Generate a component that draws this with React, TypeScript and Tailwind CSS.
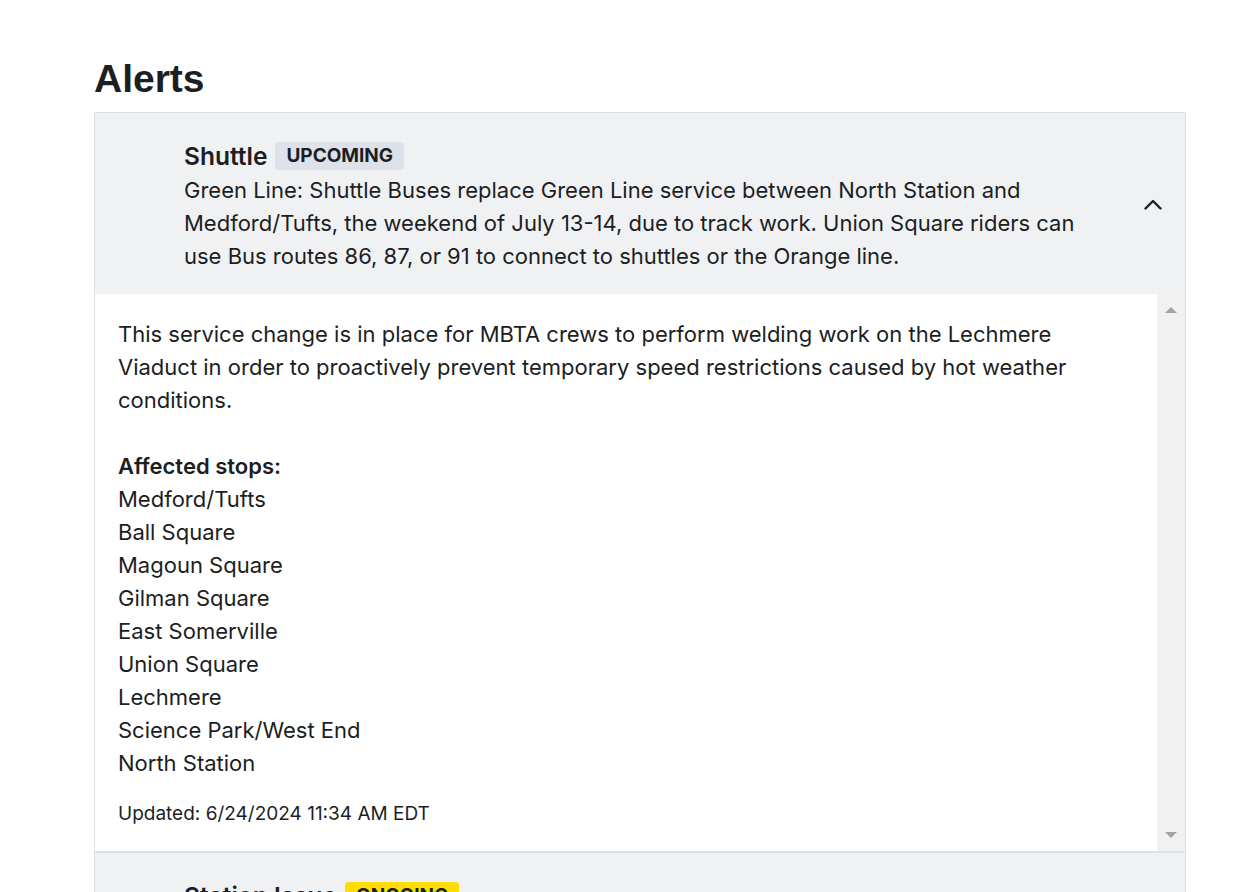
import React from "react";

const stops = [
  "Medford/Tufts",
  "Ball Square",
  "Magoun Square",
  "Gilman Square",
  "East Somerville",
  "Union Square",
  "Lechmere",
  "Science Park/West End",
  "North Station",
];

function Chevron() {
  return (
    <svg width="18" height="11" viewBox="0 0 18 11" fill="none">
      <polyline
        points="1.5,9.5 9,2 16.5,9.5"
        stroke="#1c1e23"
        strokeWidth="2.4"
        strokeLinecap="round"
        strokeLinejoin="round"
      />
    </svg>
  );
}

function FakeScrollbar() {
  return (
    <div className="w-[28px] shrink-0 bg-[#f1f1f1] flex flex-col items-center justify-between pt-[13px] pb-[13px]">
      <svg width="12" height="6" viewBox="0 0 12 6">
        <polygon points="0,6 6,0 12,6" fill="#a3a3a3" />
      </svg>
      <svg width="12" height="6" viewBox="0 0 12 6">
        <polygon points="0,0 12,0 6,6" fill="#a3a3a3" />
      </svg>
    </div>
  );
}

function AlertHeader({
  title,
  badge,
  badgeClass,
  text,
}: {
  title: string;
  badge: string;
  badgeClass: string;
  text: string;
}) {
  return (
    <div className="flex items-center bg-[#f0f1f3] pl-[89px] pt-[29px] pb-[21px]">
      <div className="flex-1 pr-[12px]">
        <div className="flex items-center gap-[8px] h-[28px]">
          <span className="text-[24.5px] leading-[28px] font-semibold">{title}</span>
          <span
            className={`h-[28px] px-[11px] rounded-[4px] text-[19px] font-bold flex items-center ${badgeClass}`}
          >
            {badge}
          </span>
        </div>
        <p className="mt-[4px] text-[22px] leading-[33px]">{text}</p>
      </div>
      <div className="w-[64px] shrink-0 flex justify-center pb-[7px]">
        <Chevron />
      </div>
    </div>
  );
}

export default function App() {
  return (
    <div
      className="h-[892px] overflow-hidden bg-white text-[#1c1e23]"
      style={{ fontFamily: "Inter, 'Noto Sans', sans-serif" }}
    >
      <div className="pl-[94px] pt-[59px] w-[1186px]">
        <h1
          className="text-[39px] leading-[39px] font-bold mb-[14px] text-[#1c1e23]"
          style={{ fontFamily: "'Liberation Sans', Arial, sans-serif" }}
        >
          Alerts
        </h1>

        <div className="border border-[#dce1e8]">
          <div className="border-b-2 border-[#dde2ea]">
            <AlertHeader
              title="Shuttle"
              badge="UPCOMING"
              badgeClass="bg-[#dde2ea]"
              text="Green Line: Shuttle Buses replace Green Line service between North Station and Medford/Tufts, the weekend of July 13-14, due to track work. Union Square riders can use Bus routes 86, 87, or 91 to connect to shuttles or the Orange line."
            />
            <div className="flex">
              <div className="flex-1 pl-[23px] pr-[32px] pt-[24px] pb-[23px] text-[22px] leading-[33px]">
                <p className="mb-[33px]">
                  This service change is in place for MBTA crews to perform welding work on the
                  Lechmere Viaduct in order to proactively prevent temporary speed restrictions
                  caused by hot weather conditions.
                </p>
                <p className="font-semibold">Affected stops:</p>
                <ul>
                  {stops.map((s) => (
                    <li key={s}>{s}</li>
                  ))}
                </ul>
                <p className="mt-[19px] text-[19px] leading-[29px]">
                  Updated: 6/24/2024 11:34 AM EDT
                </p>
              </div>
              <FakeScrollbar />
            </div>
          </div>

          <div>
            <AlertHeader
              title="Station Issue"
              badge="ONGOING"
              badgeClass="bg-[#ffdd00]"
              text="Elevator at Lechmere is out of service. Riders should use the ramps to access the platforms."
            />
          </div>
        </div>
      </div>
    </div>
  );
}
